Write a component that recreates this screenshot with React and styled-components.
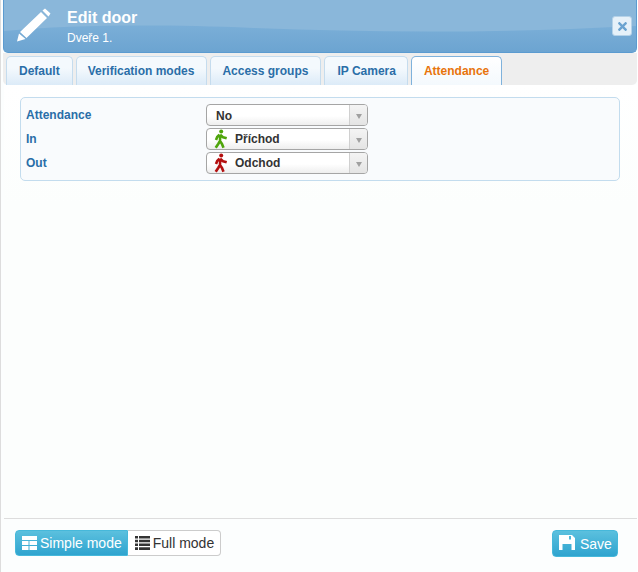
import styled, { createGlobalStyle } from "styled-components";
import { FaTimes } from "react-icons/fa";

const GlobalStyle = createGlobalStyle`
  html, body {
    margin: 0;
    padding: 0;
    background: #fff;
    font-family: "Liberation Sans", Arial, sans-serif;
    font-size: 12px;
  }
`;

const Dialog = styled.div`
  box-sizing: border-box;
  width: 637px;
  height: 572px;
  padding: 0 0 0 3px;
  display: flex;
  flex-direction: column;
  background: #fcfefe;
  border-left: 1px solid #ddd;
`;

const Header = styled.div`
  position: relative;
  box-sizing: border-box;
  height: 53px;
  margin-left: -1px;
  padding: 8px 5px 0 13px;
  display: flex;
  align-items: flex-start;
  background: linear-gradient(#7aaed7 50%, #6ca4d1);
  border: 1px solid #5b9bd0;
  border-top: none;
  border-radius: 0 0 5px 5px;
  overflow: hidden;
`;

const Gloss = styled.svg`
  position: absolute;
  left: 0;
  top: 0;
  width: 100%;
  height: 34px;
`;

const PencilIcon = styled.svg`
  position: relative;
  width: 35px;
  height: 35px;
  flex: none;
  fill: #fff;
`;

const Titles = styled.div`
  position: relative;
  margin: 1px 0 0 15px;
  color: #fff;
`;

const Title = styled.div`
  font-size: 16px;
  font-weight: bold;
  line-height: 18px;
`;

const Subtitle = styled.div`
  font-size: 12px;
  line-height: 14px;
  margin-top: 4px;
`;

const CloseButton = styled.div`
  position: absolute;
  right: 4px;
  top: 16px;
  box-sizing: border-box;
  width: 20px;
  height: 20px;
  display: flex;
  align-items: center;
  justify-content: center;
  background: #e6f1f9;
  border: 1px solid #b5d2e8;
  border-radius: 3px;
  color: #6ba3d0;
  font-size: 13px;
`;

const TabStrip = styled.div`
  box-sizing: border-box;
  height: 32px;
  margin-left: -1px;
  padding: 3px 0 0 3px;
  display: flex;
  gap: 3px;
  background: #eee;
  border-radius: 0 0 5px 5px;
`;

const Tab = styled.div`
  box-sizing: border-box;
  height: 29px;
  padding: ${props => props.$padding};
  display: flex;
  align-items: center;
  font-size: 12px;
  font-weight: bold;
  color: ${props => (props.$active ? "#e8740c" : "#2a6ea8")};
  background: ${props => (props.$active
    ? "linear-gradient(#fff, #f4f9fd)"
    : "linear-gradient(#f4f9fd 40%, #dcebf8)")};
  border: 1px solid ${props => (props.$active ? "#7fb2dc" : "#c5dcee")};
  border-bottom: none;
  border-radius: 5px 5px 0 0;
`;

const Body = styled.div`
  flex: 1;
  padding: 12px 17px 0 16px;
  background: linear-gradient(#fff, #fcfefd 120px);
`;

const Panel = styled.div`
  box-sizing: border-box;
  height: 84px;
  padding: 6px 5px 0;
  display: flex;
  flex-direction: column;
  gap: 2px;
  background: #f9fbfd;
  border: 1px solid #c3dcee;
  border-radius: 5px;
`;

const Row = styled.div`
  display: flex;
  align-items: center;
  height: 22px;
`;

const Label = styled.div`
  width: 180px;
  font-size: 12px;
  font-weight: bold;
  color: #2a6ea8;
`;

const Select = styled.div`
  box-sizing: border-box;
  width: 162px;
  height: 22px;
  display: flex;
  align-items: center;
  background: linear-gradient(#fff 55%, #eee);
  border: 1px solid #a5a5a5;
  border-radius: 4px;
`;

const SelectValue = styled.div`
  flex: 1;
  display: flex;
  align-items: center;
  padding: ${props => (props.$icon ? "0 0 0 6px" : "2px 0 0 9px")};
  gap: 6px;
  font-size: 12px;
  font-weight: bold;
  color: #333;
`;

const WalkIcon = styled.svg`
  width: 16px;
  height: 20px;
  flex: none;
  fill: none;
  stroke-width: 2.6;
  stroke-linejoin: round;
`;

const SelectArrow = styled.div`
  box-sizing: border-box;
  width: 18px;
  height: 100%;
  display: flex;
  align-items: center;
  justify-content: center;
  border-left: 1px solid #d0d0d0;
  background: linear-gradient(#f4f4f4, #e4e4e4);
  border-radius: 0 3px 3px 0;

  &::after {
    content: "";
    margin-top: 3px;
    border-left: 3px solid transparent;
    border-right: 3px solid transparent;
    border-top: 5px solid #a0a0a0;
  }
`;

const Footer = styled.div`
  box-sizing: border-box;
  height: 54px;
  padding: 11px 19px 0 11px;
  display: flex;
  align-items: flex-start;
  justify-content: space-between;
  border-top: 1px solid #ddd;
  background: #fcfefe;
`;

const ModeGroup = styled.div`
  display: flex;
`;

const ModeButton = styled.div`
  box-sizing: border-box;
  height: 26px;
  padding: 0 ${props => (props.$active ? 5 : 6)}px 0 ${props => (props.$active ? 6 : 7)}px;
  display: flex;
  align-items: center;
  gap: 3px;
  font-size: 14px;
  color: ${props => (props.$active ? "#fff" : "#333")};
  background: ${props => (props.$active
    ? "linear-gradient(#5bc0de, #2fa4cf)"
    : "#fff")};
  border: 1px solid ${props => (props.$active ? "#46b8da" : "#ccc")};
  border-radius: ${props => (props.$active ? "4px 0 0 4px" : "0 4px 4px 0")};
  border-left-width: ${props => (props.$active ? 1 : 0)}px;
`;

const ModeIcon = styled.svg`
  width: 15px;
  height: 14px;
  flex: none;
  fill: currentColor;
`;

const SaveButton = styled.div`
  box-sizing: border-box;
  width: 66px;
  height: 27px;
  padding-left: 6px;
  display: flex;
  align-items: center;
  gap: 5px;
  font-size: 14px;
  color: #fff;
  background: linear-gradient(#5bc0de, #2fa4cf);
  border: 1px solid #46b8da;
  border-radius: 4px;
`;

const SaveIcon = styled.svg`
  width: 16px;
  height: 15px;
  flex: none;
  margin-top: -3px;
  fill: #fff;
  fill-rule: evenodd;
`;

const tabs = [
  { name: "Default", padding: "0 12px" },
  { name: "Verification modes", padding: "0 12px 0 11px" },
  { name: "Access groups", padding: "0 12px 0 11px" },
  { name: "IP Camera", padding: "0 11px 0 12px" },
  { name: "Attendance", padding: "0 12px", active: true },
];

const Walker = ({ color }) => (
  <WalkIcon viewBox="0 0 16 20" stroke={color}>
    <circle cx="8.2" cy="2.6" r="2" fill={color} stroke="none" />
    <path d="M7.2 5.5L7 12M7.2 5.8L10 8.2L13.7 9.3M6.5 5.8L4.2 8L3 11M7 12L5.2 15L2.7 18.8M7 12L9 15L10.5 18.8" />
  </WalkIcon>
);

const SimpleIcon = () => (
  <ModeIcon viewBox="0 0 15 14">
    <path d="M0 0h15v4H0zM0 5h6.5v4H0zM7.5 5H15v4H7.5zM0 10h6.5v4H0zM7.5 10H15v4H7.5z" />
  </ModeIcon>
);

const FullIcon = () => (
  <ModeIcon viewBox="0 0 15 14">
    <path d="M0 0h3v2.5H0zM4 0h11v2.5H4zM0 3.7h3v2.6H0zM4 3.7h11v2.6H4zM0 7.5h3v2.6H0zM4 7.5h11v2.6H4zM0 11.3h3V14H0zM4 11.3h11V14H4z" />
  </ModeIcon>
);

export default function App() {
  return (
    <>
      <GlobalStyle />
      <Dialog>
        <Header>
          <Gloss viewBox="0 0 634 34" preserveAspectRatio="none">
            <path d="M0 0H634V26C500 33 380 33 250 28C150 24 70 25 0 31Z" fill="#8ab7da" />
          </Gloss>
          <PencilIcon viewBox="0 0 35 35">
            <path d="M0 33.5L2 25.5L8.5 31ZM3 24L24 4L30 10L9.5 30ZM25.5 2.5L28 0.5L33.5 5.5L31.5 8.5Z" />
          </PencilIcon>
          <Titles>
            <Title>Edit door</Title>
            <Subtitle>Dveře 1.</Subtitle>
          </Titles>
          <CloseButton>
            <FaTimes />
          </CloseButton>
        </Header>
        <TabStrip>
          {tabs.map(tab => (
            <Tab key={tab.name} $padding={tab.padding} $active={tab.active}>
              {tab.name}
            </Tab>
          ))}
        </TabStrip>
        <Body>
          <Panel>
            <Row>
              <Label>Attendance</Label>
              <Select>
                <SelectValue>No</SelectValue>
                <SelectArrow />
              </Select>
            </Row>
            <Row>
              <Label>In</Label>
              <Select>
                <SelectValue $icon>
                  <Walker color="#4fa50b" />
                  Příchod
                </SelectValue>
                <SelectArrow />
              </Select>
            </Row>
            <Row>
              <Label>Out</Label>
              <Select>
                <SelectValue $icon>
                  <Walker color="#b30f0f" />
                  Odchod
                </SelectValue>
                <SelectArrow />
              </Select>
            </Row>
          </Panel>
        </Body>
        <Footer>
          <ModeGroup>
            <ModeButton $active>
              <SimpleIcon />
              Simple mode
            </ModeButton>
            <ModeButton>
              <FullIcon />
              Full mode
            </ModeButton>
          </ModeGroup>
          <SaveButton>
            <SaveIcon viewBox="0 0 16 15">
              <path d="M0 0H13L16 3V15H12.5V9H3.5V15H0ZM10 1V4.5H12V1Z" />
            </SaveIcon>
            Save
          </SaveButton>
        </Footer>
      </Dialog>
    </>
  );
}
